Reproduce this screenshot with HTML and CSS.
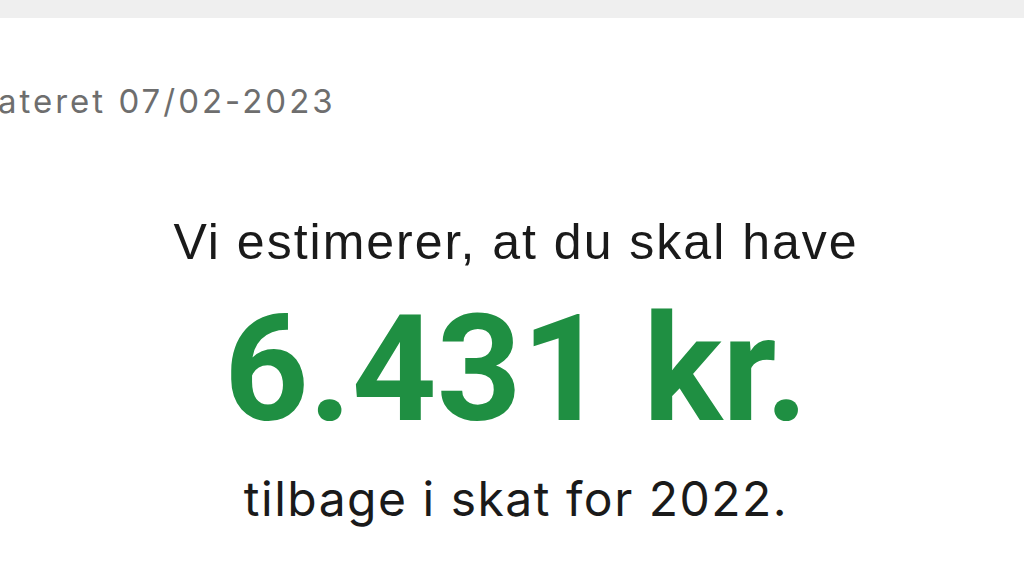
FILE: index.html
```html
<!DOCTYPE html>
<html lang="da">
<head>
<meta charset="utf-8">
<link rel="stylesheet" href="styles.css">
</head>
<body>
<div class="topbar"></div>
<main class="card">
  <p class="updated">ateret 07/02-2023</p>
  <section class="estimate">
    <p class="lead">Vi estimerer, at du skal have</p>
    <p class="amount">6.431 kr.</p>
    <p class="tail">tilbage i skat for 2022.</p>
  </section>
</main>
</body>
</html>
```
FILE: styles.css
```css
html, body {
  margin: 0;
  padding: 0;
  background: #ffffff;
  width: 1024px;
  height: 576px;
  overflow: hidden;
  font-family: Roboto, "Liberation Sans", sans-serif;
}
.topbar {
  height: 18px;
  background: #efefef;
}
.card {
  display: flex;
  flex-direction: column;
}
.updated {
  margin: 61px 0 0 -2px;
  font-family: Inter, "Liberation Sans", sans-serif;
  font-size: 33px;
  line-height: 44px;
  letter-spacing: 3px;
  color: #6e6e6e;
}
.estimate {
  display: flex;
  flex-direction: column;
  align-items: center;
  padding-left: 8px;
}
.lead {
  margin: 91px 0 0 0;
  font-family: "Liberation Sans", Arial, sans-serif;
  font-size: 50px;
  line-height: 56px;
  letter-spacing: 2px;
  color: #1a1a1a;
}
.amount {
  margin: 20px 0 0 0;
  font-size: 148px;
  line-height: 160px;
  font-weight: 700;
  color: #1f8f42;
}
.tail {
  margin: 21px 0 0 0;
  font-family: Inter, "Liberation Sans", sans-serif;
  font-size: 48px;
  line-height: 56px;
  letter-spacing: 1.5px;
  color: #1a1a1a;
}
```
